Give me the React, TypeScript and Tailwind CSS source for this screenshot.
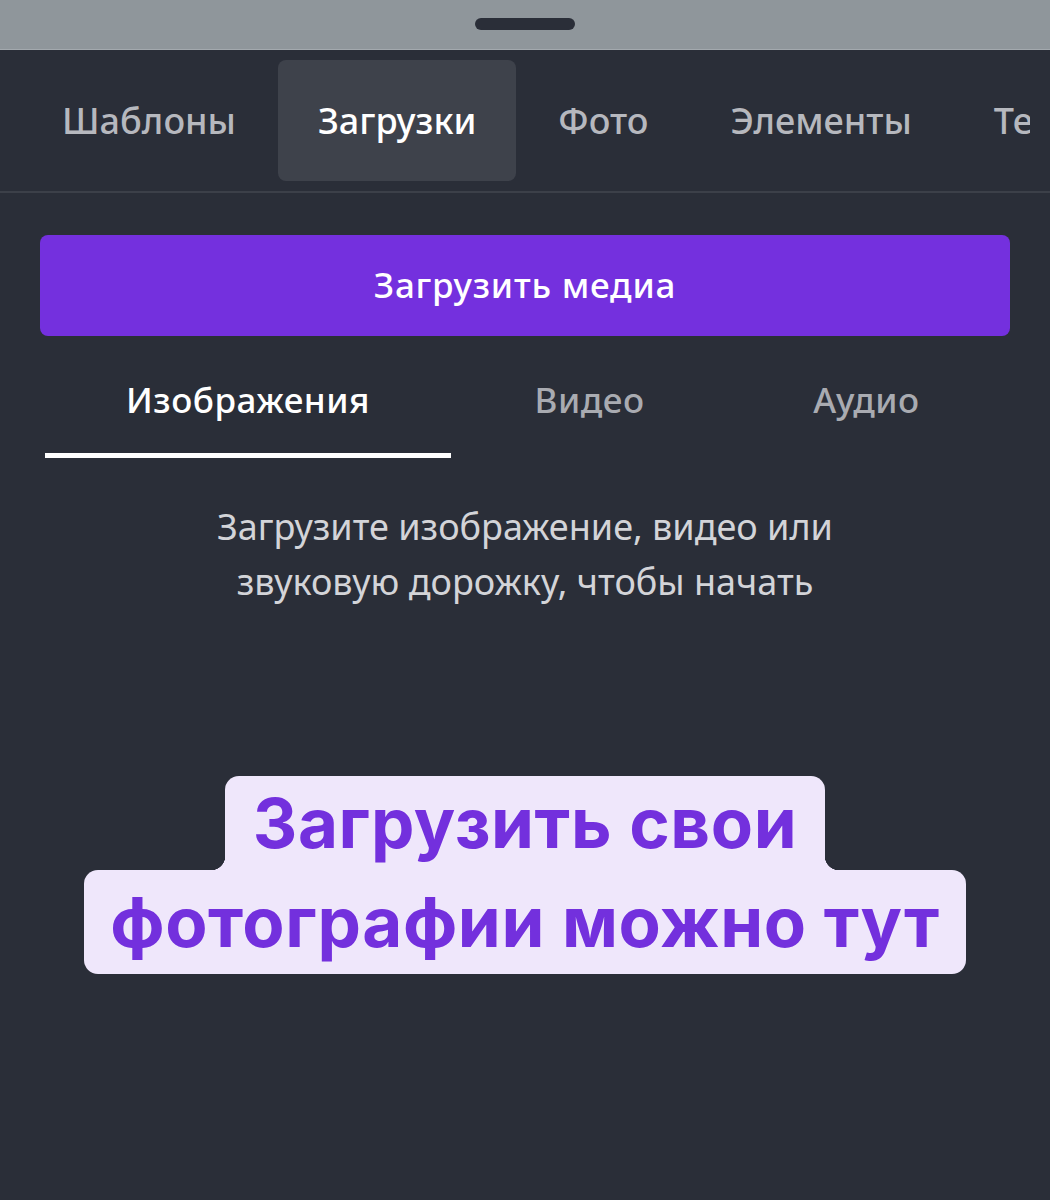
import React from 'react'

const TABS = ['Шаблоны', 'Загрузки', 'Фото', 'Элементы', 'Текст']
const SUB_TABS = ['Изображения', 'Видео', 'Аудио']

function TopTabs() {
  return (
    <div className="border-b-2 border-[#3c4049]">
      <div className="flex h-[141px] w-[1030px] items-center gap-[2px] overflow-hidden pl-[22px] text-[36px] font-medium">
        {TABS.map((t, i) => (
          <div
            key={t}
            className={
              i === 1
                ? 'flex h-[121px] shrink-0 items-center rounded-lg bg-[#3e424b] px-10 text-white'
                : 'flex h-[121px] shrink-0 items-center px-10 text-[#b6b8be]'
            }
          >
            {t}
          </div>
        ))}
      </div>
    </div>
  )
}

function SubTabs() {
  return (
    <div className="mx-[45px] mt-[28px] grid grid-cols-[406px_1fr_1fr] text-[35px] font-medium tracking-[0.5px]">
      {SUB_TABS.map((t, i) => (
        <div key={t} className="flex flex-col items-center">
          <div className={i === 0 ? 'h-[72px] leading-[72px] text-white' : 'h-[72px] leading-[72px] text-[#a9abb1]'}>{t}</div>
          <div className={i === 0 ? 'mt-[17px] h-[5px] w-full bg-white' : 'mt-[17px] h-[5px] w-full'} />
        </div>
      ))}
    </div>
  )
}

function Sticker() {
  return (
    <div
      className="absolute left-0 right-0 top-[776px] flex flex-col items-center text-[69px] font-bold tracking-[0.6px] text-[#7330dd]"
      style={{ fontFamily: 'Inter, Roboto, sans-serif' }}
    >
      <div className="relative rounded-t-[14px] bg-[#efe7fb] px-[28px] leading-[94px]">
        Загрузить свои
        <span className="absolute -left-[14px] bottom-0 h-[14px] w-[14px] bg-[radial-gradient(circle_at_0_0,transparent_14px,#efe7fb_14.5px)]" />
        <span className="absolute -right-[14px] bottom-0 h-[14px] w-[14px] bg-[radial-gradient(circle_at_100%_0,transparent_14px,#efe7fb_14.5px)]" />
      </div>
      <div className="rounded-[14px] bg-[#efe7fb] px-[26px] leading-[104px]">
        фотографии можно тут
      </div>
    </div>
  )
}

export default function App() {
  return (
    <div
      className="relative h-[1200px] w-[1050px] overflow-hidden bg-[#2a2e38]"
      style={{ fontFamily: '"Noto Sans", "Open Sans", sans-serif' }}
    >
      <div className="flex h-[50px] items-center justify-center border-b border-[#a3a9ae] bg-[#8f969b]">
        <div className="mb-[1px] h-[12px] w-[100px] rounded-full bg-[#2a2e38]" />
      </div>
      <TopTabs />
      <div className="mx-[40px] mt-[42px] flex h-[101px] items-center justify-center rounded-lg bg-[#7430de] text-[35px] font-medium tracking-[0.8px] text-white">
        Загрузить медиа
      </div>
      <SubTabs />
      <p className="mt-[41px] text-center text-[36px] leading-[55px] text-[#d3d4d8]">
        Загрузите изображение, видео или
        <br />
        звуковую дорожку, чтобы начать
      </p>
      <Sticker />
    </div>
  )
}
